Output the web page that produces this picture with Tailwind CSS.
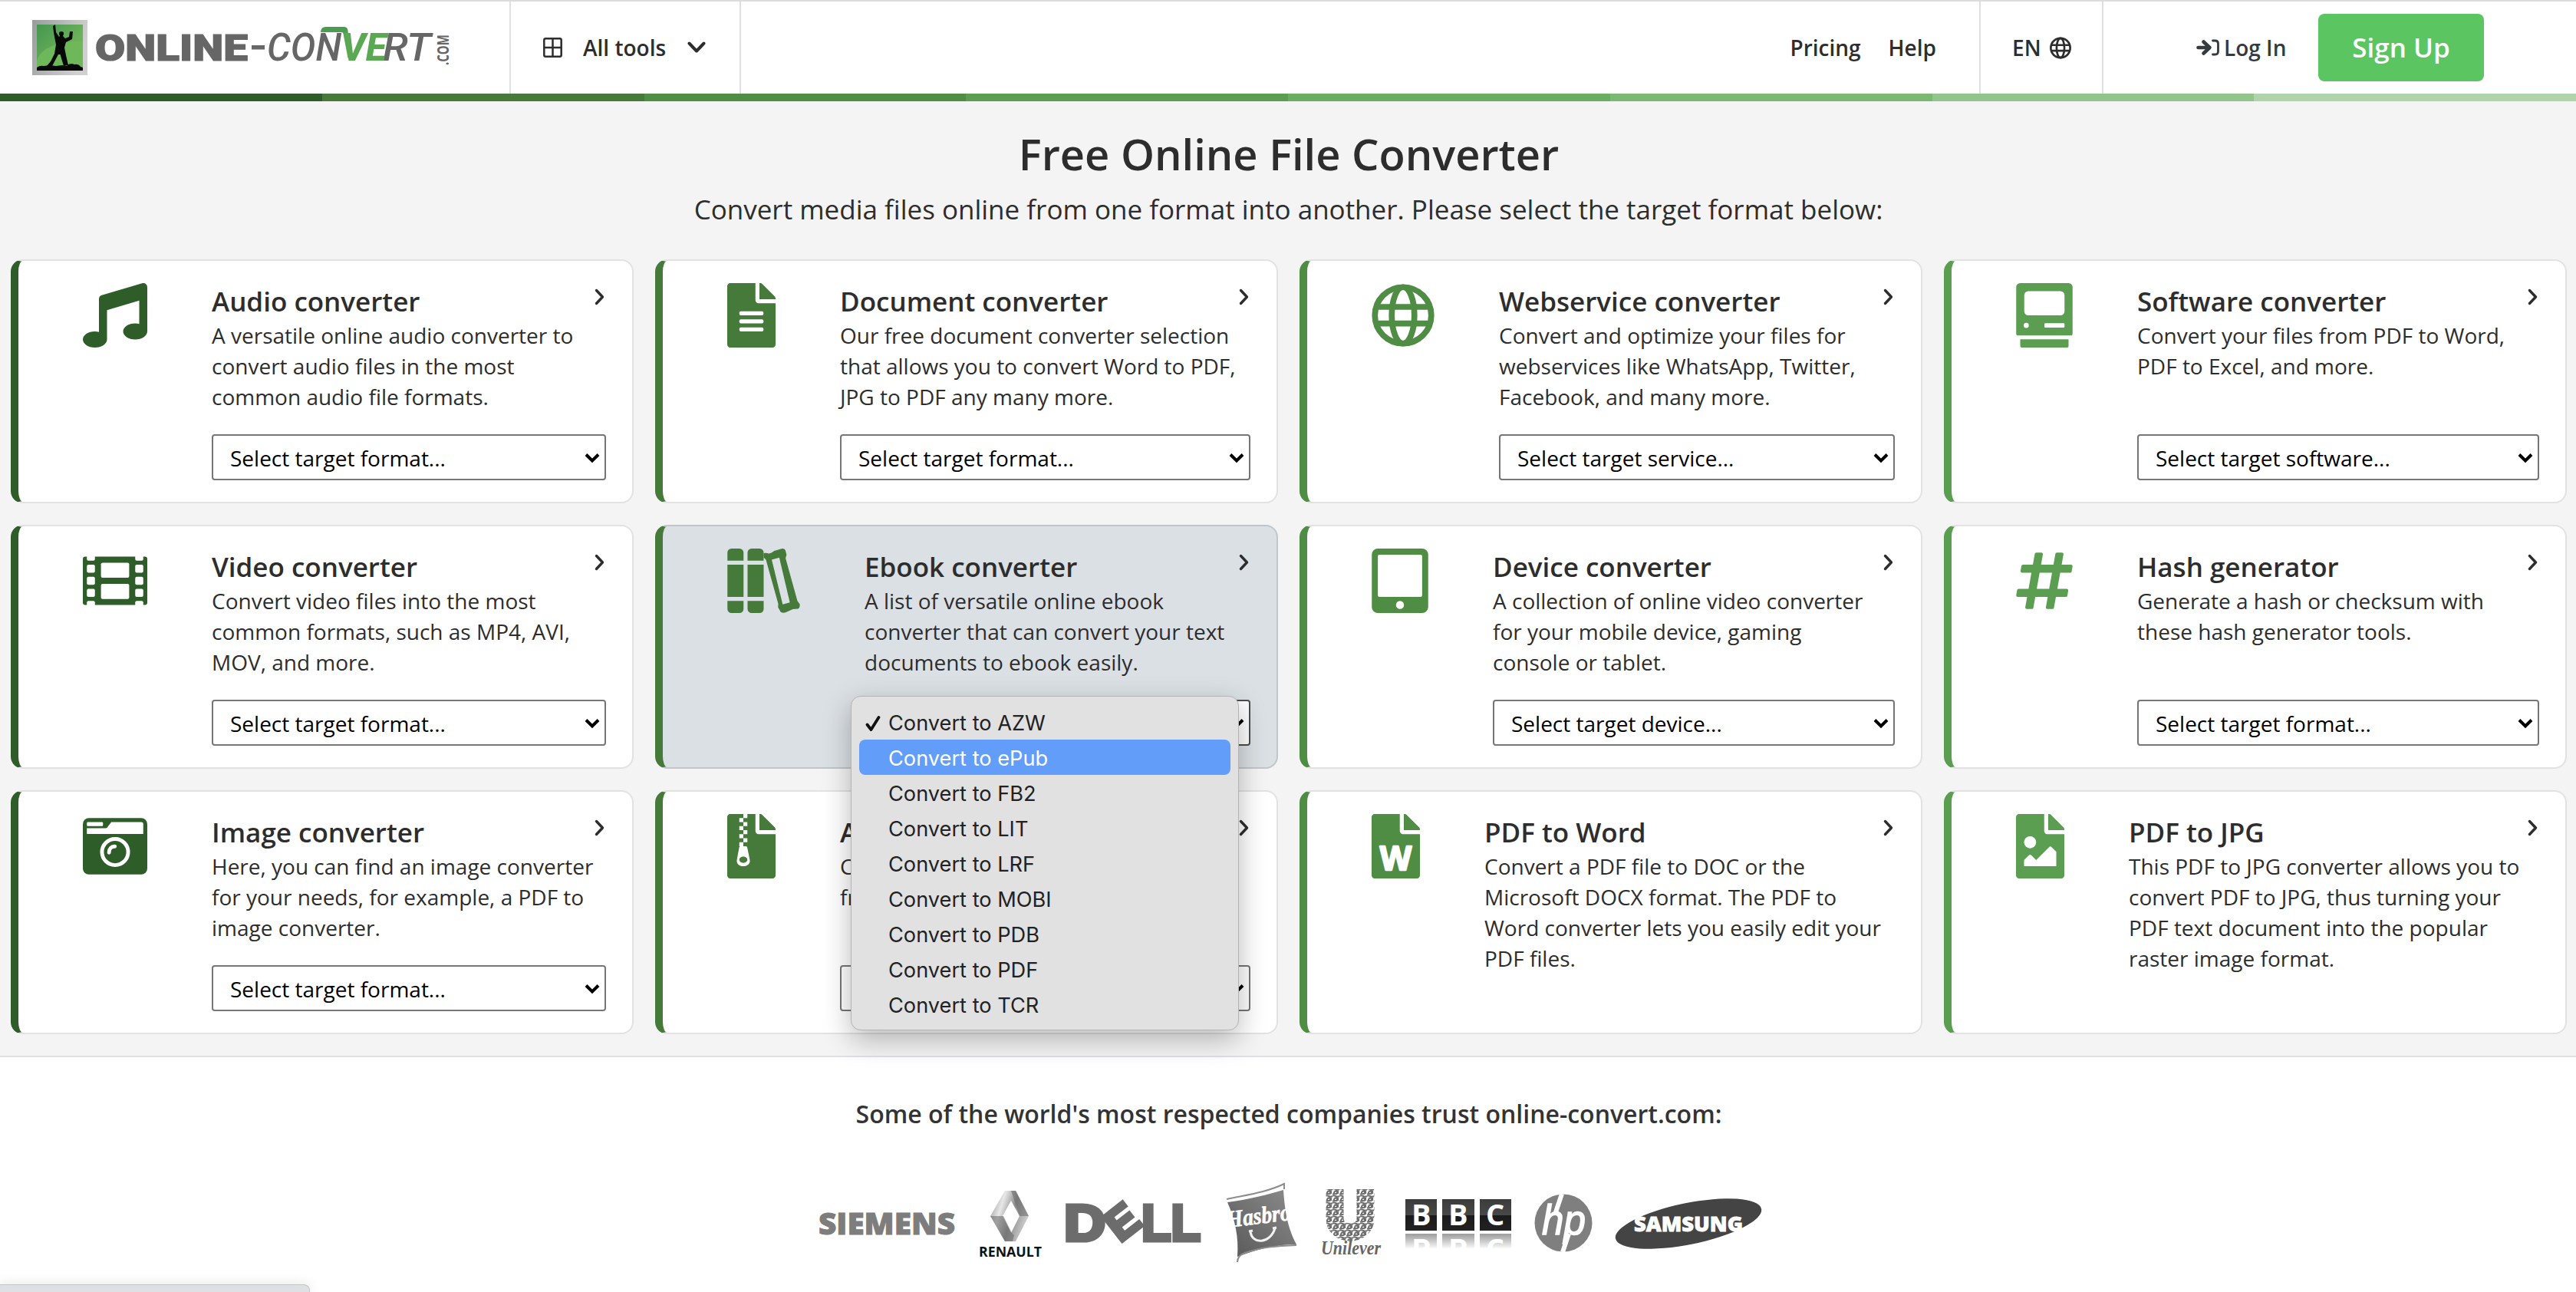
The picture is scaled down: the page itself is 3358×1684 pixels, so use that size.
<!DOCTYPE html>
<html lang="en">
<head>
<meta charset="utf-8">
<title>Free Online File Converter</title>
<script src="https://cdn.jsdelivr.net/npm/@tailwindcss/browser@4"></script>
</head>
<body class="relative h-[1684px] w-[3358px] overflow-hidden bg-white font-['Open_Sans',sans-serif] text-[28px] leading-[40px] text-[#2d2d2d]">

<!-- icon sprite -->
<svg class="hidden" xmlns="http://www.w3.org/2000/svg">
  <symbol id="music" viewBox="0 0 512 512"><path d="M470.38 1.51L150.41 96A32 32 0 0 0 128 126.51v261.41A139 139 0 0 0 96 384c-53 0-96 28.66-96 64s43 64 96 64 96-28.66 96-64V214.32l256-75v184.61a138.4 138.4 0 0 0-32-3.93c-53 0-96 28.66-96 64s43 64 96 64 96-28.65 96-64V32a32 32 0 0 0-41.62-30.49z"/></symbol>
  <symbol id="file" viewBox="0 0 384 512"><path d="M224 136V0H24C10.7 0 0 10.7 0 24v464c0 13.3 10.7 24 24 24h336c13.3 0 24-10.7 24-24V160H248c-13.2 0-24-10.8-24-24z"/><path d="M384 121.900v6.100H256V0h6.100c6.400 0 12.500 2.500 17 7l97.900 98c4.500 4.500 7 10.600 7 16.900z"/></symbol>
  <symbol id="globe" viewBox="0 0 496 512"><g fill="none" stroke="currentColor" stroke-width="47"><circle cx="248" cy="256" r="224"/><ellipse cx="248" cy="256" rx="90" ry="224"/><path d="M30 189h436M30 321h436"/></g></symbol>
  <symbol id="mac" viewBox="0 0 448 512"><path fill-rule="evenodd" d="M32 0h384a32 32 0 0 1 32 32v368a16 16 0 0 1-16 16H16a16 16 0 0 1-16-16V32A32 32 0 0 1 32 0zm64 64a32 32 0 0 0-32 32v128a32 32 0 0 0 32 32h256a32 32 0 0 0 32-32V96a32 32 0 0 0-32-32zM80 316a20 20 0 1 0 0 40 20 20 0 0 0 0-40zm152 2a8 8 0 0 0-8 8v20a8 8 0 0 0 8 8h144a8 8 0 0 0 8-8v-20a8 8 0 0 0-8-8z"/><path d="M32 446h384v50a16 16 0 0 1-16 16H48a16 16 0 0 1-16-16z"/></symbol>
  <symbol id="film" viewBox="0 0 512 512"><rect y="64" width="512" height="384" rx="20"/><g fill="#fff"><rect x="32" y="48" width="64" height="48" rx="12"/><rect x="416" y="48" width="64" height="48" rx="12"/><rect x="32" y="128" width="64" height="64" rx="12"/><rect x="416" y="128" width="64" height="64" rx="12"/><rect x="32" y="224" width="64" height="64" rx="12"/><rect x="416" y="224" width="64" height="64" rx="12"/><rect x="32" y="320" width="64" height="64" rx="12"/><rect x="416" y="320" width="64" height="64" rx="12"/><rect x="32" y="416" width="64" height="48" rx="12"/><rect x="416" y="416" width="64" height="48" rx="12"/><rect x="144" y="112" width="224" height="120" rx="12"/><rect x="144" y="280" width="224" height="120" rx="12"/></g></symbol>
  <symbol id="books" viewBox="0 0 576 512"><path d="M0 96V32A32 32 0 0 1 32 0h64a32 32 0 0 1 32 32v64zM160 96V32a32 32 0 0 1 32-32h64a32 32 0 0 1 32 32v64zM0 128h128v256H0zM160 128h128v256H160zM0 416h128v64a32 32 0 0 1-32 32H32a32 32 0 0 1-32-32zM160 416h128v64a32 32 0 0 1-32 32h-64a32 32 0 0 1-32-32z"/><path fill-rule="evenodd" d="M288 36Q310 32 330 40L350 34 372 18 430 1Q455-3 462 18L470 50 462 76 556 416 574 440Q580 468 562 478L520 482 462 508Q424 516 416 490L402 466 404 440 306 88 288 70zM352 88L439 444 496 428 412 72z"/></symbol>
  <symbol id="tablet" viewBox="0 0 448 512"><path fill-rule="evenodd" d="M48 0h352a48 48 0 0 1 48 48v416a48 48 0 0 1-48 48H48a48 48 0 0 1-48-48V48A48 48 0 0 1 48 0zm12 48a12 12 0 0 0-12 12v312a12 12 0 0 0 12 12h328a12 12 0 0 0 12-12V60a12 12 0 0 0-12-12zm164 368a32 32 0 1 0 0 64 32 32 0 0 0 0-64z"/></symbol>
  <symbol id="hashtag" viewBox="0 0 448 512"><path d="M440.667 182.109l7.143-40c1.313-7.355-4.342-14.109-11.813-14.109h-74.810l14.623-81.891C377.123 38.754 371.468 32 363.997 32h-40.632a12 12 0 0 0-11.813 9.891L296.175 128H197.540l14.623-81.891C213.477 38.754 207.822 32 200.350 32h-40.632a12 12 0 0 0-11.813 9.891L132.528 128H53.432a12 12 0 0 0-11.813 9.891l-7.143 40C33.163 185.246 38.818 192 46.289 192h74.810L98.242 320H19.146a12 12 0 0 0-11.813 9.891l-7.143 40C-1.123 377.246 4.532 384 12.003 384h74.810L72.190 465.891C70.877 473.246 76.532 480 84.003 480h40.632a12 12 0 0 0 11.813-9.891L151.826 384h98.634l-14.623 81.891C234.523 473.246 240.178 480 247.650 480h40.632a12 12 0 0 0 11.813-9.891L315.472 384h79.096a12 12 0 0 0 11.813-9.891l7.143-40c1.313-7.355-4.342-14.109-11.813-14.109h-74.810l22.857-128h79.096a12 12 0 0 0 11.813-9.891zM261.889 320h-98.634l22.857-128h98.634l-22.857 128z"/></symbol>
  <symbol id="camera" viewBox="0 0 512 512"><rect y="32" width="512" height="448" rx="48"/><g fill="#fff"><rect x="32" y="64" width="128" height="32" rx="8"/><path d="M226 64h238q16 0 16 16v78H32v-46h150q10 0 15-10z"/></g><circle cx="256" cy="302" r="104" fill="none" stroke="#fff" stroke-width="30"/><path d="M208 306c0-28 18-48 46-48" fill="none" stroke="#fff" stroke-width="30" stroke-linecap="round"/></symbol>
  <symbol id="next" viewBox="0 0 14 22"><path d="M2.500 2.500l8 8.500-8 8.500" fill="none" stroke="#2d2d2d" stroke-width="3.400" stroke-linecap="round" stroke-linejoin="round"/></symbol>
  <symbol id="drop" viewBox="0 0 20 14"><path d="M2 2.500l8 8 8-8" fill="none" stroke="#000" stroke-width="4"/></symbol>
</svg>

<!-- top bar -->
<header class="flex h-[122px] items-stretch border-t-2 border-[#dcdcdc] bg-white font-semibold">
  <div class="flex w-[666px] items-center border-r-2 border-[#dee0e4] pl-[42px]">
    <svg class="h-[76px] w-[548px] overflow-visible" viewBox="42 24 548 76">
      <defs>
        <linearGradient id="frame" x1="0" x2="1" y1="0" y2="0.300"><stop stop-color="#9a9b9d"/><stop offset="1" stop-color="#d0d0d1"/></linearGradient>
        <linearGradient id="grass" x1="0" x2="1" y1="0" y2="1"><stop stop-color="#44964f"/><stop offset="0.600" stop-color="#6bb25a"/></linearGradient>
        <linearGradient id="swoosh" x1="0" x2="0" y1="0" y2="1"><stop stop-color="#489a50"/><stop offset="1" stop-color="#6cb558"/></linearGradient>
      </defs>
      <rect x="42" y="26" width="72" height="72" fill="url(#frame)"/>
      <rect x="48" y="32" width="60" height="60" fill="url(#grass)"/>
      <path d="M48 80c4-18 26-25 60-27v39H48z" fill="#6fb85a"/>
      <path d="M69 34L72 32 73 42 77 48 78 47Q75 41 80 41 85 41 82 47L85 50 90 48 91 41 95 41 94 51 86 55 84 62 86 72 89 85 83 86 78.500 71 76 71 68 86 61 86 66 80 71 70 73 58 71 48 70 42z" fill="#060906"/>
      <path d="M48 88q4-3 9-2l8-1 8 1 8-1 6 1q4-5 10-2 5-1 8 3l3 1v4H48z" fill="#060906"/>
      <g fill="#666">
        <text x="124" y="79" stroke="#666" stroke-width="1.200" class="font-['Roboto',sans-serif] text-[49px] font-black" textLength="199" lengthAdjust="spacingAndGlyphs">ONLINE</text>
        <rect x="328" y="59" width="17" height="5.500"/>
        <text x="348" y="79" class="font-['Roboto',sans-serif] text-[49px] font-medium italic" textLength="97" lengthAdjust="spacingAndGlyphs">CON</text>
        <text x="499" y="79" class="font-['Roboto',sans-serif] text-[49px] font-medium italic" textLength="63" lengthAdjust="spacingAndGlyphs">RT</text>
        <text transform="translate(585 85) rotate(-90)" class="font-['Open_Sans',sans-serif] text-[22px] font-bold" textLength="40" lengthAdjust="spacingAndGlyphs">.COM</text>
      </g>
      <path d="M418 42q0-7 7-7h23q5 0 5.500 5l3 30-3 6-6-32q0-2-3-2z" fill="url(#swoosh)"/>
      <text x="445" y="79" fill="#5aa854" class="font-['Roboto',sans-serif] text-[49px] font-extrabold italic" textLength="59" lengthAdjust="spacingAndGlyphs">VE</text>
    </svg>
  </div>
  <div class="flex w-[300px] items-center border-r-2 border-[#dee0e4] pl-[42px]">
    <svg class="h-[26px] w-[25px]" viewBox="0 0 25 26" fill="none" stroke="#2d2d2d" stroke-width="2.500"><rect x="1.300" y="1.300" width="22.400" height="23.400" rx="2"/><path d="M12.500 1v24M1 13h23"/></svg>
    <span class="ml-[27px]">All tools</span>
    <svg class="ml-[28px] h-4 w-6" viewBox="0 0 24 16"><path d="M2.500 2.500l9.500 10 9.500-10" fill="none" stroke="#2d2d2d" stroke-width="4" stroke-linecap="round" stroke-linejoin="round"/></svg>
  </div>
  <nav class="ml-auto flex items-center gap-[36px] pr-[56px]"><a>Pricing</a><a>Help</a></nav>
  <div class="flex w-[162px] items-center gap-[11px] border-x-2 border-[#dee0e4] pl-[41px]">EN
    <svg class="mr-[-4px] h-[29px] w-[28px] text-[#2d2d2d]"><use href="#globe"/></svg>
  </div>
  <div class="flex w-[616px] items-center pl-[121px]">
    <svg class="h-[22px] w-[30px]" viewBox="0 0 30 22" fill="none" stroke="#353a3f" stroke-linecap="round" stroke-linejoin="round"><path d="M2.500 11h14M9.500 3.500l8 7.500-8 7.500" stroke-width="4.600"/><path d="M21.500 2h3q4 0 4 4v10q0 4-4 4h-3" stroke-width="2.800"/></svg>
    <a class="ml-[6px] w-[123px] whitespace-nowrap text-[#353a3f]">Log In</a>
    <a class="flex h-[88px] w-[216px] items-center justify-center rounded-lg bg-[#5bc562] text-[35px] text-white">Sign Up</a>
  </div>
</header>
<div class="grid h-[10px] grid-cols-8">
  <i class="bg-[#2f5d29]"></i><i class="bg-[#467a3a]"></i><i class="bg-[#4f8c44]"></i><i class="bg-[#5c9e51]"></i><i class="bg-[#6aae61]"></i><i class="bg-[#7bb872]"></i><i class="bg-[#92c58c]"></i><i class="bg-[#aed4ac]"></i>
</div>

<main class="h-[1246px] border-b-2 border-[#dee0e4] bg-[#f4f4f4] pt-[30px]">
  <h1 class="pl-0.5 text-center text-[56px] leading-[76px] font-semibold">Free Online File Converter</h1>
  <p class="mt-[10px] pl-px text-center text-[35px] leading-[50px]">Convert media files online from one format into another. Please select the target format below:</p>

  <section class="relative mt-[40px] ml-[14px] grid w-[3332px] grid-cols-4 grid-rows-[318px_318px_318px] gap-7">

    <article class="relative flex rounded-[16px] border-2 border-l-[10px] border-[#e2e2e2] border-l-[#2f5d29] bg-white pt-[30px] pb-[28px] pl-[84px] text-[#2f5d29]">
      <svg class="mt-[-1px] h-[84px] w-[84px] shrink-0 fill-current"><use href="#music"/></svg>
      <div class="ml-[84px] flex w-[514px] flex-col whitespace-nowrap text-[#2d2d2d]">
        <h2 class="text-[35px] leading-[45px] font-semibold">Audio converter</h2>
        <p class="mt-0.5">A versatile online audio converter to<br>convert audio files in the most<br>common audio file formats.</p>
        <div class="mt-auto flex h-[60px] items-center justify-between rounded border-2 border-[#767676] bg-white pt-px pr-[6px] pl-[22px] text-black"><span>Select target format...</span><svg class="h-[14px] w-5"><use href="#drop"/></svg></div>
      </div>
      <svg class="absolute top-[36px] right-[35px] h-[22px] w-[14px]"><use href="#next"/></svg>
    </article>

    <article class="relative flex rounded-[16px] border-2 border-l-[10px] border-[#e2e2e2] border-l-[#467a3a] bg-white pt-[30px] pb-[28px] pl-[84px] text-[#467a3a]">
      <svg class="mt-[-1px] h-[84px] w-[63px] shrink-0 fill-current" viewBox="0 0 384 512"><use href="#file"/><g fill="#fff"><rect x="96" y="224" width="192" height="32" rx="12"/><rect x="96" y="288" width="192" height="32" rx="12"/><rect x="96" y="352" width="192" height="32" rx="12"/></g></svg>
      <div class="ml-[84px] flex w-[535px] flex-col whitespace-nowrap text-[#2d2d2d]">
        <h2 class="text-[35px] leading-[45px] font-semibold">Document converter</h2>
        <p class="mt-0.5">Our free document converter selection<br>that allows you to convert Word to PDF,<br>JPG to PDF any many more.</p>
        <div class="mt-auto flex h-[60px] items-center justify-between rounded border-2 border-[#767676] bg-white pt-px pr-[6px] pl-[22px] text-black"><span>Select target format...</span><svg class="h-[14px] w-5"><use href="#drop"/></svg></div>
      </div>
      <svg class="absolute top-[36px] right-[35px] h-[22px] w-[14px]"><use href="#next"/></svg>
    </article>

    <article class="relative flex rounded-[16px] border-2 border-l-[10px] border-[#e2e2e2] border-l-[#4f8c44] bg-white pt-[30px] pb-[28px] pl-[84px] text-[#4f8c44]">
      <svg class="mt-[-1px] h-[84px] w-[82px] shrink-0 fill-current"><use href="#globe"/></svg>
      <div class="ml-[84px] flex w-[516px] flex-col whitespace-nowrap text-[#2d2d2d]">
        <h2 class="text-[35px] leading-[45px] font-semibold">Webservice converter</h2>
        <p class="mt-0.5">Convert and optimize your files for<br>webservices like WhatsApp, Twitter,<br>Facebook, and many more.</p>
        <div class="mt-auto flex h-[60px] items-center justify-between rounded border-2 border-[#767676] bg-white pt-px pr-[6px] pl-[22px] text-black"><span>Select target service...</span><svg class="h-[14px] w-5"><use href="#drop"/></svg></div>
      </div>
      <svg class="absolute top-[36px] right-[35px] h-[22px] w-[14px]"><use href="#next"/></svg>
    </article>

    <article class="relative flex rounded-[16px] border-2 border-l-[10px] border-[#e2e2e2] border-l-[#5c9e51] bg-white pt-[30px] pb-[28px] pl-[84px] text-[#5c9e51]">
      <svg class="mt-[-1px] h-[84px] w-[74px] shrink-0 fill-current"><use href="#mac"/></svg>
      <div class="ml-[84px] flex w-[524px] flex-col whitespace-nowrap text-[#2d2d2d]">
        <h2 class="text-[35px] leading-[45px] font-semibold">Software converter</h2>
        <p class="mt-0.5">Convert your files from PDF to Word,<br>PDF to Excel, and more.</p>
        <div class="mt-auto flex h-[60px] items-center justify-between rounded border-2 border-[#767676] bg-white pt-px pr-[6px] pl-[22px] text-black"><span>Select target software...</span><svg class="h-[14px] w-5"><use href="#drop"/></svg></div>
      </div>
      <svg class="absolute top-[36px] right-[35px] h-[22px] w-[14px]"><use href="#next"/></svg>
    </article>

    <article class="relative flex rounded-[16px] border-2 border-l-[10px] border-[#e2e2e2] border-l-[#2f5d29] bg-white pt-[30px] pb-[28px] pl-[84px] text-[#2f5d29]">
      <svg class="mt-[-1px] h-[84px] w-[84px] shrink-0 fill-current"><use href="#film"/></svg>
      <div class="ml-[84px] flex w-[514px] flex-col whitespace-nowrap text-[#2d2d2d]">
        <h2 class="text-[35px] leading-[45px] font-semibold">Video converter</h2>
        <p class="mt-0.5">Convert video files into the most<br>common formats, such as MP4, AVI,<br>MOV, and more.</p>
        <div class="mt-auto flex h-[60px] items-center justify-between rounded border-2 border-[#767676] bg-white pt-px pr-[6px] pl-[22px] text-black"><span>Select target format...</span><svg class="h-[14px] w-5"><use href="#drop"/></svg></div>
      </div>
      <svg class="absolute top-[36px] right-[35px] h-[22px] w-[14px]"><use href="#next"/></svg>
    </article>

    <article class="relative flex rounded-[16px] border-2 border-l-[10px] border-[#c1c6ca] border-l-[#467a3a] bg-[#dbe0e4] pt-[30px] pb-[28px] pl-[84px] text-[#467a3a]">
      <svg class="mt-[-1px] h-[84px] w-[95px] shrink-0 fill-current"><use href="#books"/></svg>
      <div class="ml-[84px] flex w-[503px] flex-col whitespace-nowrap text-[#2d2d2d]">
        <h2 class="text-[35px] leading-[45px] font-semibold">Ebook converter</h2>
        <p class="mt-0.5">A list of versatile online ebook<br>converter that can convert your text<br>documents to ebook easily.</p>
        <div class="mt-auto flex h-[60px] items-center justify-end rounded border-2 border-[#4d4d4d] bg-white pt-px pr-[6px] pl-[22px] text-black"><svg class="h-[14px] w-5"><use href="#drop"/></svg></div>
      </div>
      <svg class="absolute top-[36px] right-[35px] h-[22px] w-[14px]"><use href="#next"/></svg>
    </article>

    <article class="relative flex rounded-[16px] border-2 border-l-[10px] border-[#e2e2e2] border-l-[#4f8c44] bg-white pt-[30px] pb-[28px] pl-[84px] text-[#4f8c44]">
      <svg class="mt-[-1px] h-[84px] w-[74px] shrink-0 fill-current"><use href="#tablet"/></svg>
      <div class="ml-[84px] flex w-[524px] flex-col whitespace-nowrap text-[#2d2d2d]">
        <h2 class="text-[35px] leading-[45px] font-semibold">Device converter</h2>
        <p class="mt-0.5">A collection of online video converter<br>for your mobile device, gaming<br>console or tablet.</p>
        <div class="mt-auto flex h-[60px] items-center justify-between rounded border-2 border-[#767676] bg-white pt-px pr-[6px] pl-[22px] text-black"><span>Select target device...</span><svg class="h-[14px] w-5"><use href="#drop"/></svg></div>
      </div>
      <svg class="absolute top-[36px] right-[35px] h-[22px] w-[14px]"><use href="#next"/></svg>
    </article>

    <article class="relative flex rounded-[16px] border-2 border-l-[10px] border-[#e2e2e2] border-l-[#5c9e51] bg-white pt-[30px] pb-[28px] pl-[84px] text-[#5c9e51]">
      <svg class="mt-[-1px] h-[84px] w-[74px] shrink-0 fill-current"><use href="#hashtag"/></svg>
      <div class="ml-[84px] flex w-[524px] flex-col whitespace-nowrap text-[#2d2d2d]">
        <h2 class="text-[35px] leading-[45px] font-semibold">Hash generator</h2>
        <p class="mt-0.5">Generate a hash or checksum with<br>these hash generator tools.</p>
        <div class="mt-auto flex h-[60px] items-center justify-between rounded border-2 border-[#767676] bg-white pt-px pr-[6px] pl-[22px] text-black"><span>Select target format...</span><svg class="h-[14px] w-5"><use href="#drop"/></svg></div>
      </div>
      <svg class="absolute top-[36px] right-[35px] h-[22px] w-[14px]"><use href="#next"/></svg>
    </article>

    <article class="relative flex rounded-[16px] border-2 border-l-[10px] border-[#e2e2e2] border-l-[#2f5d29] bg-white pt-[30px] pb-[28px] pl-[84px] text-[#2f5d29]">
      <svg class="mt-[-1px] h-[84px] w-[84px] shrink-0 fill-current"><use href="#camera"/></svg>
      <div class="ml-[84px] flex w-[514px] flex-col whitespace-nowrap text-[#2d2d2d]">
        <h2 class="text-[35px] leading-[45px] font-semibold">Image converter</h2>
        <p class="mt-0.5">Here, you can find an image converter<br>for your needs, for example, a PDF to<br>image converter.</p>
        <div class="mt-auto flex h-[60px] items-center justify-between rounded border-2 border-[#767676] bg-white pt-px pr-[6px] pl-[22px] text-black"><span>Select target format...</span><svg class="h-[14px] w-5"><use href="#drop"/></svg></div>
      </div>
      <svg class="absolute top-[36px] right-[35px] h-[22px] w-[14px]"><use href="#next"/></svg>
    </article>

    <article class="relative flex rounded-[16px] border-2 border-l-[10px] border-[#e2e2e2] border-l-[#467a3a] bg-white pt-[30px] pb-[28px] pl-[84px] text-[#467a3a]">
      <svg class="mt-[-1px] h-[84px] w-[63px] shrink-0 fill-current" viewBox="0 0 384 512"><use href="#file"/><path fill="#fff" d="M128 0h32v32h-32zM96 32h32v32H96zM128 64h32v32h-32zM96 96h32v32H96zM128 128h32v32h-32zM96 160h32v32H96zM128 192h32v32h-32zM96 224h32v32H96z"/><path fill="#fff" fill-rule="evenodd" d="M106 256h42c6 0 10 4 11 9l20 97c7 32-19 52-51 52s-58-20-51-52l18-97c1-5 5-9 11-9zm22 82c-18 0-32 11-32 25s14 25 32 25 32-11 32-25-14-25-32-25z"/></svg>
      <div class="ml-[84px] flex w-[535px] flex-col whitespace-nowrap text-[#2d2d2d]">
        <h2 class="text-[35px] leading-[45px] font-semibold">A</h2>
        <p class="mt-0.5">C<br>fr</p>
        <div class="mt-auto flex h-[60px] items-center justify-end rounded border-2 border-[#767676] bg-white pt-px pr-[6px] pl-[22px] text-black"><svg class="h-[14px] w-5"><use href="#drop"/></svg></div>
      </div>
      <svg class="absolute top-[36px] right-[35px] h-[22px] w-[14px]"><use href="#next"/></svg>
    </article>

    <article class="relative flex rounded-[16px] border-2 border-l-[10px] border-[#e2e2e2] border-l-[#4f8c44] bg-white pt-[30px] pb-[28px] pl-[84px] text-[#4f8c44]">
      <svg class="mt-[-1px] h-[84px] w-[63px] shrink-0 fill-current" viewBox="0 0 384 512"><use href="#file"/><text x="66" y="446" fill="#fff" stroke="#fff" stroke-width="14" stroke-linejoin="round" class="text-[262px] font-bold" textLength="252" lengthAdjust="spacingAndGlyphs">W</text></svg>
      <div class="ml-[84px] flex w-[535px] flex-col whitespace-nowrap text-[#2d2d2d]">
        <h2 class="text-[35px] leading-[45px] font-semibold">PDF to Word</h2>
        <p class="mt-0.5">Convert a PDF file to DOC or the<br>Microsoft DOCX format. The PDF to<br>Word converter lets you easily edit your<br>PDF files.</p>
      </div>
      <svg class="absolute top-[36px] right-[35px] h-[22px] w-[14px]"><use href="#next"/></svg>
    </article>

    <article class="relative flex rounded-[16px] border-2 border-l-[10px] border-[#e2e2e2] border-l-[#5c9e51] bg-white pt-[30px] pb-[28px] pl-[84px] text-[#5c9e51]">
      <svg class="mt-[-1px] h-[84px] w-[63px] shrink-0 fill-current" viewBox="0 0 384 512"><use href="#file"/><g fill="#fff"><circle cx="112" cy="224" r="48"/><path d="M64 414v-48l40-40q8-6 16 0l40 40 104-104q10-8 18 0l38 38v114z"/></g></svg>
      <div class="ml-[84px] flex w-[535px] flex-col whitespace-nowrap text-[#2d2d2d]">
        <h2 class="text-[35px] leading-[45px] font-semibold">PDF to JPG</h2>
        <p class="mt-0.5">This PDF to JPG converter allows you to<br>convert PDF to JPG, thus turning your<br>PDF text document into the popular<br>raster image format.</p>
      </div>
      <svg class="absolute top-[36px] right-[35px] h-[22px] w-[14px]"><use href="#next"/></svg>
    </article>

    <!-- open format menu -->
    <ul class="absolute top-[569px] left-[1095px] h-[436px] w-[506px] rounded-[13px] border border-[#b4b4b4] bg-[#e1e1e1] px-[10px] pt-[10px] font-['Inter',sans-serif] text-[27.200px] leading-[49px] text-[#222] shadow-[0_12px_36px_rgba(0,0,0,0.28)]">
      <li class="flex h-[46px] items-start pl-[8px]"><svg class="mt-[14px] mr-[10px] h-[22px] w-[20px]" viewBox="0 0 20 22"><path d="M2.500 12.500l5 6.500L17.500 3" fill="none" stroke="#111" stroke-width="3.800" stroke-linecap="round" stroke-linejoin="round"/></svg>Convert to AZW</li>
      <li class="h-[46px] rounded-lg bg-[#629df9] pl-[38px] text-white">Convert to ePub</li>
      <li class="h-[46px] pl-[38px]">Convert to FB2</li>
      <li class="h-[46px] pl-[38px]">Convert to LIT</li>
      <li class="h-[46px] pl-[38px]">Convert to LRF</li>
      <li class="h-[46px] pl-[38px]">Convert to MOBI</li>
      <li class="h-[46px] pl-[38px]">Convert to PDB</li>
      <li class="h-[46px] pl-[38px]">Convert to PDF</li>
      <li class="h-[46px] pl-[38px]">Convert to TCR</li>
    </ul>
  </section>
</main>

<footer class="pt-[50px]">
  <p class="pl-0.5 text-center text-[32px] leading-[48px] font-semibold text-[#333]">Some of the world's most respected companies trust online-convert.com:</p>
  <div class="mt-[64px] ml-[1066px] flex h-[110px]">
    <svg class="h-[110px] w-[180px] overflow-visible" viewBox="0 0 180 110"><text x="1" y="69" fill="#7d7d7d" stroke="#7d7d7d" stroke-width="1" class="text-[38px] font-extrabold" textLength="178" lengthAdjust="spacingAndGlyphs">SIEMENS</text></svg>
    <svg class="ml-[28px] h-[110px] w-[86px] overflow-visible" viewBox="1274 1540 86 110">
      <defs><linearGradient id="metal" x1="0" x2="1" y1="0" y2="0.400"><stop stop-color="#8a8a8a"/><stop offset="0.350" stop-color="#e8e8e8"/><stop offset="0.650" stop-color="#8c8c8c"/><stop offset="1" stop-color="#c8c8c8"/></linearGradient></defs>
      <path fill="url(#metal)" fill-rule="evenodd" d="M1310 1552h14l17 33-17 33h-14l-19-33zM1318 1565l-11 20 11 22 11-22z"/>
      <path d="M1308 1585l-17 0 19 33h10l2-8-3-3zM1324 1552h-6l11 33h12z" fill="#666" opacity="0.550"/>
      <text x="1276" y="1637.500" fill="#111" class="text-[18.500px] font-bold" textLength="82" lengthAdjust="spacingAndGlyphs">RENAULT</text>
    </svg>
    <svg class="ml-[26px] h-[110px] w-[180px] overflow-visible" viewBox="1386 1540 180 110" fill="#6c6c6c" stroke="#6c6c6c" stroke-width="5">
      <text x="1387" y="1616.500" class="font-['Liberation_Sans',sans-serif] text-[67px] font-bold" textLength="54" lengthAdjust="spacingAndGlyphs">D</text>
      <text transform="translate(1460 1620) rotate(-38)" class="font-['Liberation_Sans',sans-serif] text-[58px] font-bold">E</text>
      <text x="1488" y="1616.500" class="font-['Liberation_Sans',sans-serif] text-[67px] font-bold" textLength="77" lengthAdjust="spacingAndGlyphs">LL</text>
    </svg>
    <svg class="ml-[28px] h-[110px] w-[98px] overflow-visible" viewBox="1594 1540 98 110">
      <defs><linearGradient id="toy" x1="0" x2="1" y1="1" y2="0"><stop stop-color="#585858"/><stop offset="1" stop-color="#8c8c8c"/></linearGradient></defs>
      <path d="M1600 1567c30-4 52-10 73-16 2 30 6 50 17 71-26 0-50 6-77 16 2-26-3-48-13-71z" fill="url(#toy)"/>
      <path d="M1599 1563c28-6 52-9 75-20v7M1613 1645c0-6 4-10 10-12 22-8 44-9 67-10" fill="none" stroke="#8d8d8d" stroke-width="2"/>
      <text transform="translate(1600 1600) rotate(-7)" fill="#fff" stroke="#fff" stroke-width="0.600" class="font-['Liberation_Serif',serif] text-[31px] font-bold italic" textLength="84" lengthAdjust="spacingAndGlyphs">Hasbro</text>
      <path d="M1630 1605c2 18 26 16 32-4M1628 1605l5-1M1659 1601l5-1" fill="none" stroke="#f2f2f2" stroke-width="3"/>
    </svg>
    <svg class="ml-[26px] h-[110px] w-[86px] overflow-visible" viewBox="1718 1540 86 110">
      <defs><pattern id="curls" width="9" height="9" patternUnits="userSpaceOnUse"><rect width="9" height="9" fill="#fff"/><path d="M0 2c3-3 5 3 9 0M2 6c2-3 5-1 4 1s-4 2-4-1M7 4v4M0 8.500h4" fill="none" stroke="#6e6e6e" stroke-width="2.200"/></pattern></defs>
      <path d="M1740 1550v38c0 24 40 24 40 0v-38" fill="none" stroke="url(#curls)" stroke-width="23"/>
      <text x="1722" y="1635" fill="#666" class="font-['Liberation_Serif',serif] text-[25px] font-bold italic" textLength="78" lengthAdjust="spacingAndGlyphs">Unilever</text>
    </svg>
    <svg class="ml-[24px] h-[110px] w-[144px]" viewBox="1828 1540 144 110">
      <defs>
        <linearGradient id="tile" x1="0" x2="0" y1="0" y2="1"><stop stop-color="#3c3c3c"/><stop offset="0.500" stop-color="#484848"/><stop offset="0.500" stop-color="#1a1a1a"/><stop offset="1" stop-color="#222"/></linearGradient>
        <linearGradient id="fade" x1="0" x2="0" y1="0" y2="1"><stop stop-color="#fff" stop-opacity="0.300"/><stop offset="1" stop-color="#fff"/></linearGradient>
        <g id="tiles"><path fill="url(#tile)" d="M1832 1563h41v41h-41zM1880 1563h42v41h-42zM1929 1563h41v41h-41z"/>
        <g fill="#fff" class="text-[38px] font-bold"><text x="1840" y="1597">B</text><text x="1888" y="1597">B</text><text x="1937" y="1597">C</text></g></g>
      </defs>
      <use href="#tiles"/>
      <g transform="matrix(1 0 0 -1 0 3212)" opacity="0.700"><use href="#tiles"/></g>
      <rect x="1828" y="1606" width="144" height="22" fill="url(#fade)"/><rect x="1828" y="1627" width="144" height="23" fill="#fff"/>
    </svg>
    <svg class="ml-[27px] h-[110px] w-[78px] overflow-visible" viewBox="1999 1540 78 110">
      <circle cx="2038" cy="1594" r="37.500" fill="#7f7f7f"/>
      <text x="2010" y="1609" fill="#fff" stroke="#fff" stroke-width="1.500" class="font-['Liberation_Sans',sans-serif] text-[56px] italic" textLength="57" lengthAdjust="spacingAndGlyphs">hp</text>
      <path d="M2036 1556l-8 24M2037 1632l8-24" stroke="#fff" stroke-width="6"/>
    </svg>
    <svg class="ml-[25px] h-[110px] w-[198px] overflow-visible" viewBox="2102 1540 198 110">
      <ellipse cx="2201" cy="1595" rx="97" ry="27" transform="rotate(-11.500 2201 1595)" fill="#444"/>
      <text x="2130" y="1604.500" fill="#fff" stroke="#fff" stroke-width="0.800" class="text-[27px] font-extrabold" textLength="142" lengthAdjust="spacingAndGlyphs">SAMSUNG</text>
    </svg>
  </div>
</footer>

<!-- link status bubble -->
<div class="absolute top-[1674px] left-0 h-[12px] w-[404px] rounded-tr-lg border-t border-r border-[#c4c4c8] bg-[#dfe0e3] shadow-[0_0_16px_rgba(0,0,0,0.12)]"></div>
</body>
</html>
